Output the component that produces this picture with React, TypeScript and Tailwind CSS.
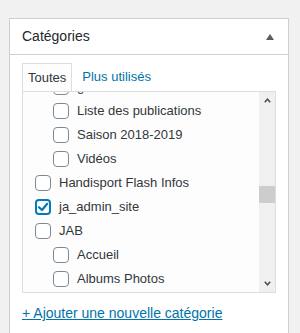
const rows: { label: string; level: number; checked?: boolean }[] = [
  { label: "galeries", level: 1 },
  { label: "Liste des publications", level: 1 },
  { label: "Saison 2018-2019", level: 1 },
  { label: "Vidéos", level: 1 },
  { label: "Handisport Flash Infos", level: 0 },
  { label: "ja_admin_site", level: 0, checked: true },
  { label: "JAB", level: 0 },
  { label: "Accueil", level: 1 },
  { label: "Albums Photos", level: 1 },
];

function CheckBox({ checked }: { checked?: boolean }) {
  if (checked) {
    return (
      <span className="flex h-4 w-4 shrink-0 items-center justify-center rounded-[4px] border-2 border-[#007cba] bg-white">
        <svg width="12" height="12" viewBox="0 0 12 12">
          <polyline
            points="2,6.2 5,9 10.2,2.8"
            fill="none"
            stroke="#007cba"
            strokeWidth="2.2"
            strokeLinecap="round"
            strokeLinejoin="round"
          />
        </svg>
      </span>
    );
  }
  return (
    <span className="block h-4 w-4 shrink-0 rounded-[4px] border border-[#7e8993] bg-white" />
  );
}

export default function App() {
  return (
    <div className="min-h-screen bg-[#f1f1f1] pt-[18px] pl-[9px] pr-[11px] font-['Liberation_Sans',Arial,sans-serif]">
      <div className="border border-[#ccd0d4] bg-white">
        <div className="flex h-[36px] items-center justify-between border-b border-[#ccd0d4] pl-3 pr-[14px]">
          <h2 className="text-[14px] text-[#23282d]">Catégories</h2>
          <svg width="8" height="6" viewBox="0 0 8 6">
            <polygon points="4,0 8,6 0,6" fill="#555d66" />
          </svg>
        </div>

        <div className="px-3 pt-2 pb-6">
          <div className="flex items-start text-[13px]">
            <div className="relative z-10 mb-[-1px] flex h-[28px] items-center border border-b-0 border-[#dddddd] bg-[#fdfdfd] px-[5px] text-[#32373c]">
              Toutes
            </div>
            <div className="ml-[10px] flex h-[28px] items-center text-[#0073aa]">
              Plus utilisés
            </div>
          </div>

          <div className="flex h-[202px] border border-[#dddddd] bg-[#fdfdfd]">
            <div className="flex-1 overflow-hidden">
              <div className="mt-[-17px]">
                {rows.map((row) => (
                  <div
                    key={row.label}
                    className={`flex h-[24px] items-center gap-2 text-[13px] text-[#32373c] ${
                      row.level === 1 ? "pl-[30px]" : "pl-3"
                    }`}
                  >
                    <CheckBox checked={row.checked} />
                    <span>{row.label}</span>
                  </div>
                ))}
              </div>
            </div>

            <div className="flex w-[16px] flex-col bg-[#f0f0f0]">
              <div className="flex h-[17px] items-center justify-center">
                <svg width="7" height="5" viewBox="0 0 7 5">
                  <polyline points="0.8,4.2 3.5,1.2 6.2,4.2" fill="none" stroke="#505050" strokeWidth="1.6" />
                </svg>
              </div>
              <div className="flex-1">
                <div className="mt-[77px] h-[17px] bg-[#cdcdcd]" />
              </div>
              <div className="flex h-[17px] items-center justify-center">
                <svg width="7" height="5" viewBox="0 0 7 5">
                  <polyline points="0.8,0.8 3.5,3.8 6.2,0.8" fill="none" stroke="#505050" strokeWidth="1.6" />
                </svg>
              </div>
            </div>
          </div>

          <a href="#" className="mt-[10px] block text-[14px] leading-5 text-[#0073aa] underline">
            + Ajouter une nouvelle catégorie
          </a>
        </div>
      </div>
    </div>
  );
}
